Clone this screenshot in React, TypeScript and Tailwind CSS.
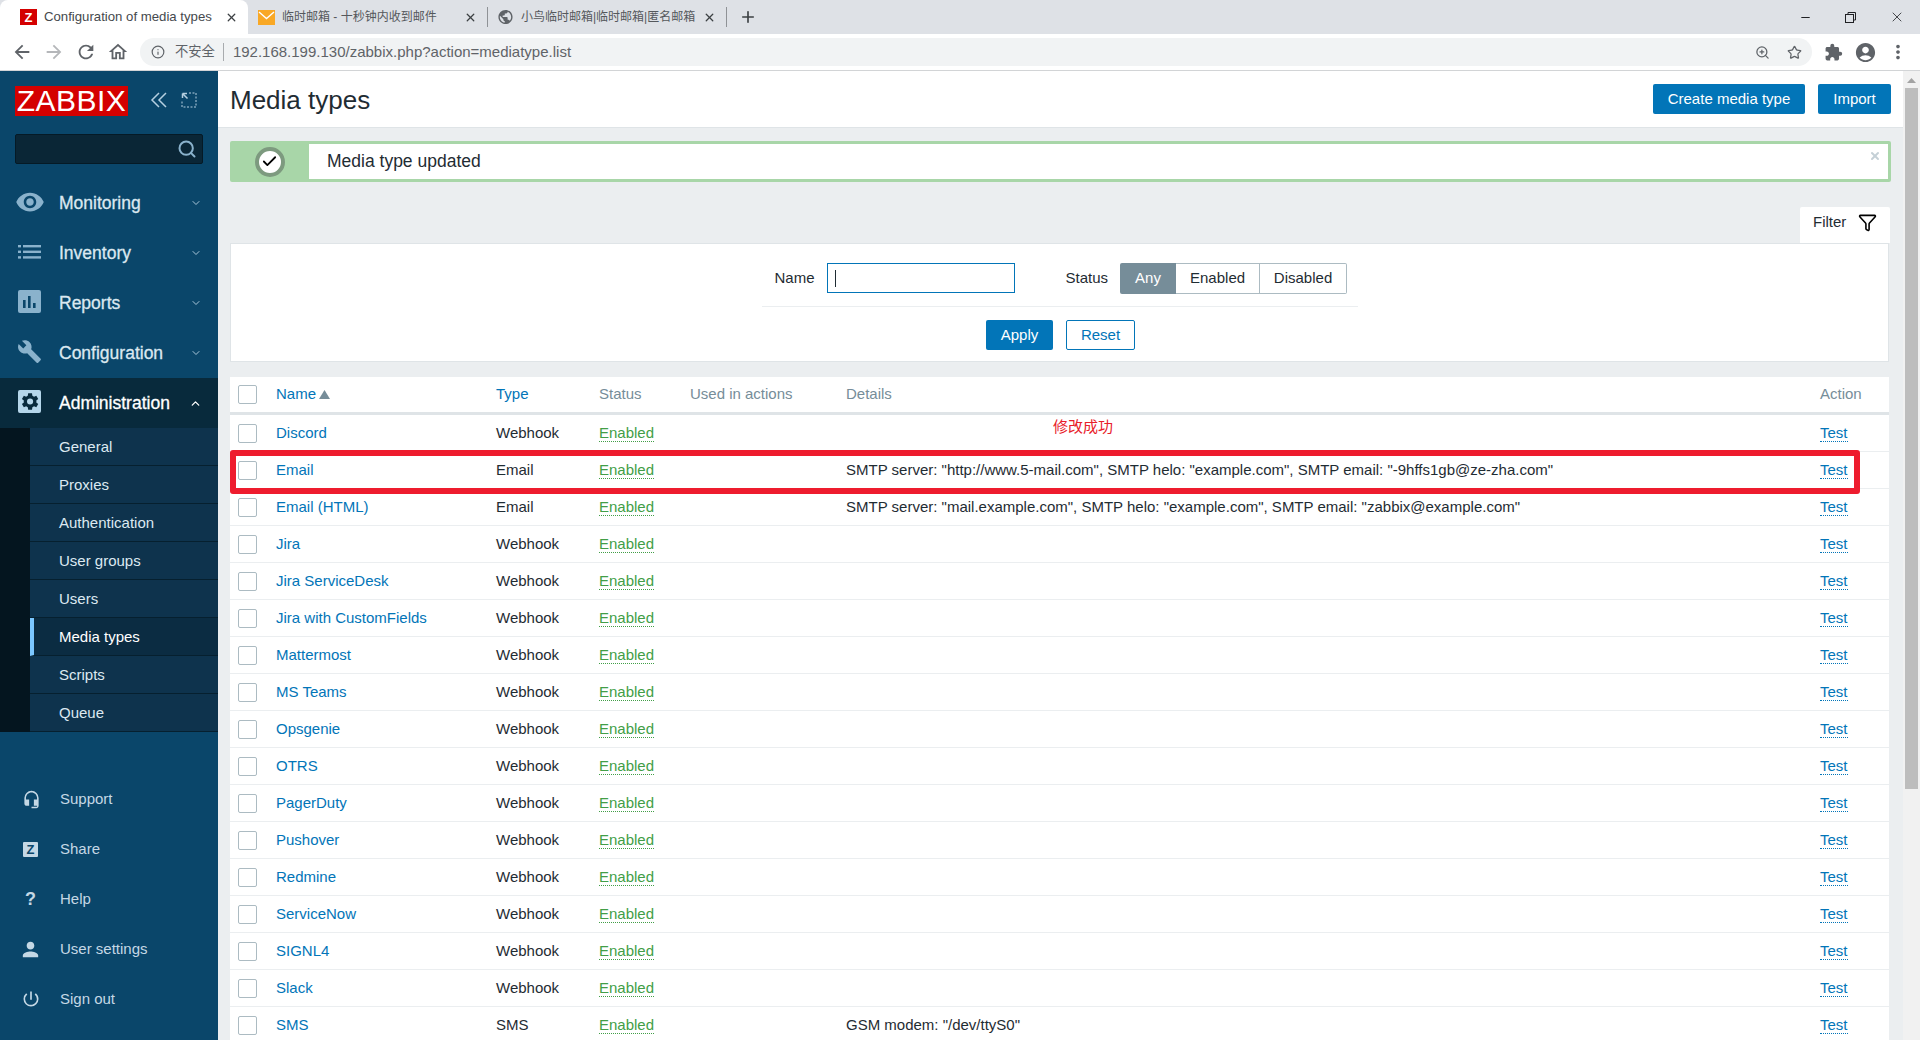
import React from 'react'
import { Info, ZoomIn, Star, X, Plus, Minus, Search, ChevronDown, ChevronUp, Funnel, Check } from 'lucide-react'
import {
  MdArrowBack, MdArrowForward, MdRefresh, MdOutlineHome, MdExtension, MdAccountCircle, MdMoreVert,
  MdPublic, MdVisibility, MdBuild, MdHeadsetMic, MdPerson, MdPowerSettingsNew,
} from 'react-icons/md'

const BLUE = 'text-[#0275b8]'

const rows = [
  { name: 'Discord', type: 'Webhook', details: '' },
  { name: 'Email', type: 'Email', details: 'SMTP server: "http://www.5-mail.com", SMTP helo: "example.com", SMTP email: "-9hffs1gb@ze-zha.com"' },
  { name: 'Email (HTML)', type: 'Email', details: 'SMTP server: "mail.example.com", SMTP helo: "example.com", SMTP email: "zabbix@example.com"' },
  { name: 'Jira', type: 'Webhook', details: '' },
  { name: 'Jira ServiceDesk', type: 'Webhook', details: '' },
  { name: 'Jira with CustomFields', type: 'Webhook', details: '' },
  { name: 'Mattermost', type: 'Webhook', details: '' },
  { name: 'MS Teams', type: 'Webhook', details: '' },
  { name: 'Opsgenie', type: 'Webhook', details: '' },
  { name: 'OTRS', type: 'Webhook', details: '' },
  { name: 'PagerDuty', type: 'Webhook', details: '' },
  { name: 'Pushover', type: 'Webhook', details: '' },
  { name: 'Redmine', type: 'Webhook', details: '' },
  { name: 'ServiceNow', type: 'Webhook', details: '' },
  { name: 'SIGNL4', type: 'Webhook', details: '' },
  { name: 'Slack', type: 'Webhook', details: '' },
  { name: 'SMS', type: 'SMS', details: 'GSM modem: "/dev/ttyS0"' },
]

const ListIcon = () => (
  <svg width="23" height="14" viewBox="0 0 23 14" fill="currentColor">
    <rect x="0" y="0" width="3" height="2.4" /><rect x="5" y="0" width="18" height="2.4" />
    <rect x="0" y="5.6" width="3" height="2.4" /><rect x="5" y="5.6" width="18" height="2.4" />
    <rect x="0" y="11.2" width="3" height="2.4" /><rect x="5" y="11.2" width="18" height="2.4" />
  </svg>
)

const ReportsIcon = () => (
  <svg width="23" height="23" viewBox="0 0 23 23">
    <rect width="23" height="23" rx="2" fill="currentColor" />
    <rect x="5" y="10" width="2.6" height="8" fill="#0a466a" />
    <rect x="10" y="6" width="2.6" height="12" fill="#0a466a" />
    <rect x="15" y="13" width="2.6" height="5" fill="#0a466a" />
  </svg>
)

const GearBoxIcon = () => (
  <svg width="23" height="23" viewBox="0 0 24 24">
    <rect width="24" height="24" rx="2" fill="currentColor" />
    <path fill="#082a3c" d="M19.1 13c.1-.3.1-.7.1-1s0-.7-.1-1l2-1.6-2-3.4-2.4 1c-.5-.4-1.100-.7-1.700-1L14.600 3.500h-4L10.200 6c-.6.3-1.200.6-1.700 1l-2.400-1-2 3.400 2 1.600c-.1.300-.1.700-.1 1s0 .7.1 1l-2 1.600 2 3.400 2.400-1c.5.400 1.100.7 1.700 1l.4 2.500h4l.4-2.500c.6-.3 1.200-.6 1.700-1l2.400 1 2-3.400-2-1.600zM12.600 15.200a3.200 3.200 0 1 1 0-6.400 3.200 3.200 0 0 1 0 6.400z" />
  </svg>
)

const menu = [
  { label: 'Monitoring', icon: <MdVisibility size={30} className="-ml-[3px]" /> },
  { label: 'Inventory', icon: <ListIcon /> },
  { label: 'Reports', icon: <ReportsIcon /> },
  { label: 'Configuration', icon: <MdBuild size={25} className="-ml-[1px]" /> },
]

const subMenu = ['General', 'Proxies', 'Authentication', 'User groups', 'Users', 'Media types', 'Scripts', 'Queue']

const bottomMenu = [
  { label: 'Support', icon: <MdHeadsetMic size={19} className="-ml-[1px]" /> },
  { label: 'Share', icon: <span className="w-[15px] h-[15px] bg-[#c5d8e5] text-[#0a466a] rounded-[1px] flex items-center justify-center text-[13px] font-bold leading-none">Z</span> },
  { label: 'Help', icon: <span className="text-[18px] font-bold leading-none pl-[2px]">?</span> },
  { label: 'User settings', icon: <MdPerson size={23} className="-ml-[4px]" /> },
  { label: 'Sign out', icon: <MdPowerSettingsNew size={20} className="-ml-[2px]" /> },
]

const MailFavicon = () => (
  <svg width="17" height="15" viewBox="0 0 17 15">
    <rect width="17" height="15" fill="#f9a825" />
    <path d="M1 2l7.500 6.500L16 2" fill="none" stroke="#fff" strokeWidth="1.400" />
  </svg>
)

const Tab = ({ icon, title, active, width, pad }: { icon: React.ReactNode; title: string; active?: boolean; width: string; pad: string }) => (
  <div className={`h-full flex items-center shrink-0 rounded-t-[8px] ${pad} ${width} ${active ? 'bg-white' : ''}`}>
    <span className="w-[17px] h-[16px] flex items-center justify-center shrink-0">{icon}</span>
    <span className={`ml-[7px] flex-1 whitespace-nowrap ${active ? 'text-[13.2px] text-[#45494d]' : 'text-[12px] text-[#55585c]'}`}>{title}</span>
    <X size={13} strokeWidth={2.4} className="mr-[10px] text-[#3c4043] shrink-0" />
  </div>
)

const Browser = () => (
  <div className="shrink-0">
    <div className="h-[34px] bg-[#dee1e6] flex items-end">
      <Tab width="w-[248px]" pad="pl-[20px]" active title="Configuration of media types"
        icon={<span className="w-[17px] h-[16px] bg-[#d40000] text-white text-[13px] font-bold leading-none flex items-center justify-center">Z</span>} />
      <Tab width="w-[239px]" pad="pl-[10px]" title="临时邮箱 - 十秒钟内收到邮件" icon={<MailFavicon />} />
      <span className="w-px h-[20px] bg-[#8f9296] mb-[7px]" />
      <Tab width="w-[238px]" pad="pl-[9px]" title="小鸟临时邮箱|临时邮箱|匿名邮箱" icon={<MdPublic size={18} className="text-[#5f6368]" />} />
      <span className="w-px h-[20px] bg-[#8f9296] mb-[7px]" />
      <Plus size={18} strokeWidth={2.2} className="ml-[12px] mb-[8px] text-[#3c4043]" />
      <div className="ml-auto h-full flex items-center text-[#202124]">
        <Minus size={13} className="mr-[33px]" />
        <svg width="11" height="11" viewBox="0 0 11 11" fill="none" stroke="currentColor" className="mr-[33px]">
          <rect x="0.5" y="2.5" width="8" height="8" /><path d="M3 2.5V0.500h7.500V8H8.500" />
        </svg>
        <X size={16} strokeWidth={1.2} className="mr-[15px]" />
      </div>
    </div>
    <div className="h-[36px] bg-white flex items-center">
      <div className="w-[140px] flex items-center pl-[11px] gap-[10px] text-[#5f6368] shrink-0">
        <MdArrowBack size={22} />
        <MdArrowForward size={22} className="text-[#b5b7ba]" />
        <MdRefresh size={22} />
        <MdOutlineHome size={22} />
      </div>
      <div className="w-[1672px] h-[28px] rounded-full bg-[#f1f3f4] flex items-center pl-[11px] pr-[10px] shrink-0">
        <Info size={14} className="text-[#5f6368]" />
        <span className="ml-[10px] text-[13.3px] text-[#5f6368]">不安全</span>
        <span className="w-px h-[18px] bg-[#a8abae] ml-[8px]" />
        <span className="ml-[9px] text-[15px] text-[#5f6368]">192.168.199.130/zabbix.php?action=mediatype.list</span>
        <ZoomIn size={15} className="ml-auto text-[#5f6368]" />
        <Star size={15} strokeWidth={2} className="ml-[17px] text-[#5f6368]" />
      </div>
      <MdExtension size={19} className="ml-[12px] text-[#5f6368]" />
      <MdAccountCircle size={23} className="ml-[11px] text-[#5f6368]" />
      <MdMoreVert size={22} className="ml-[10px] text-[#5f6368]" />
    </div>
    <div className="h-px bg-[#d2d4d6]" />
  </div>
)

const Sidebar = () => (
  <aside className="w-[218px] shrink-0 bg-[#0a466a] flex flex-col overflow-hidden">
    <div className="h-[45px] flex items-end pl-[15px] shrink-0">
      <span className="w-[113px] h-[30px] bg-[#d40000] text-white text-[30px] leading-[30px] text-center tracking-[0.5px]">ZABBIX</span>
      <svg width="18" height="16" viewBox="0 0 18 16" fill="none" stroke="#b5cfe0" strokeWidth="1.5" className="ml-[22px] mb-[8px]">
        <path d="M9 1L2 8l7 7M16 1L9 8l7 7" />
      </svg>
      <svg width="16" height="16" viewBox="0 0 16 16" fill="none" stroke="#b5cfe0" className="ml-[13px] mb-[8px]">
        <path d="M8 1h7v14H1V8" strokeDasharray="2 1.5" /><path d="M1.500 1.500l5 5M1.500 1.500v4.500M1.500 1.500h4.500" strokeWidth="1.5" />
      </svg>
    </div>
    <div className="mt-[18px] mx-[15px] h-[30px] bg-[#0a2636] border border-[#051a26] rounded-[2px] flex items-center justify-end pr-[5px] shrink-0">
      <Search size={20} strokeWidth={2.4} className="text-[#8ab2cc]" />
    </div>
    <nav className="mt-[14px] shrink-0">
      {menu.map((m) => (
        <div key={m.label} className="h-[50px] flex items-center text-[#dbe8f0]">
          <span className="w-[59px] pl-[18px] -mt-[3px] flex items-center text-[#8ab2cc]">{m.icon}</span>
          <span className="text-[17.5px] flex-1 [-webkit-text-stroke:0.3px_currentColor]">{m.label}</span>
          <ChevronDown size={12} strokeWidth={2} className="mr-[16px] text-[#a9c6d9]" />
        </div>
      ))}
      <div className="h-[50px] flex items-center bg-[#082a3c] text-white">
        <span className="w-[59px] pl-[18px] -mt-[3px] flex items-center text-[#b5d6ea]"><GearBoxIcon /></span>
        <span className="text-[17.5px] flex-1 [-webkit-text-stroke:0.3px_currentColor]">Administration</span>
        <ChevronUp size={13} strokeWidth={2.4} className="mr-[16px]" />
      </div>
      <div className="bg-[#04151f] pl-[30px]">
        {subMenu.map((s) => (
          <div key={s} className={`h-[38px] flex items-center pt-[2px] text-[15px] border-b border-[#06202f] ${s === 'Media types' ? 'bg-[#0b2c42] text-white border-l-4 border-l-[#7bc7ff] pl-[25px]' : 'bg-[#0e334d] text-[#dce9f1] pl-[29px]'}`}>
            {s}
          </div>
        ))}
      </div>
    </nav>
    <div className="mt-[42px] shrink-0">
      {bottomMenu.map((b) => (
        <div key={b.label} className="h-[50px] flex items-center text-[#c5d8e5]">
          <span className="w-[60px] pl-[23px] flex items-center">{b.icon}</span>
          <span className="text-[15px]">{b.label}</span>
        </div>
      ))}
    </div>
  </aside>
)

const Checkbox = () => <span className="block w-[19px] h-[19px] bg-white border border-[#acbbc2] rounded-[2px]" />

const TableRow = ({ name, type, details }: { name: string; type: string; details: string }) => (
  <div className="h-[37px] grid grid-cols-[46px_220px_103px_91px_156px_974px_69px] items-center border-b border-[#ebeef0] text-[15px] text-[#1f2c33]">
    <span className="pl-[8px]"><Checkbox /></span>
    <span className={BLUE}>{name}</span>
    <span>{type}</span>
    <span><span className="text-[#429e47] border-b border-dotted border-[#429e47]">Enabled</span></span>
    <span />
    <span>{details}</span>
    <span><span className={`${BLUE} border-b border-dotted border-[#0275b8]`}>Test</span></span>
  </div>
)

export default function App() {
  return (
    <div className="h-screen flex flex-col overflow-hidden bg-white font-['Liberation_Sans','Noto_Sans_CJK_SC',sans-serif]">
      <Browser />
      <div className="flex-1 flex min-h-0">
        <Sidebar />
        <main className="flex-1 min-w-0 bg-[#ebeef0] overflow-hidden relative">
          {/* page header */}
          <div className="h-[57px] bg-white border-b border-[#dfe4e7] flex items-center px-[12px]">
            <h1 className="text-[26px] text-[#1f2c33] flex-1 pt-[2px]">Media types</h1>
            <button className="h-[30px] w-[152px] bg-[#0275b8] text-white text-[15px] rounded-[2px]">Create media type</button>
            <button className="h-[30px] w-[73px] ml-[13px] bg-[#0275b8] text-white text-[15px] rounded-[2px]">Import</button>
          </div>

          <div className="px-[12px]">
            {/* message */}
            <div className="mt-[13px] h-[41px] bg-[#a8d6a8] rounded-[2px] flex p-[3px] pl-0">
              <div className="w-[79px] flex items-center justify-center shrink-0">
                <span className="w-[30px] h-[30px] rounded-full bg-white border-[4px] border-[#7d9a7f] flex items-center justify-center">
                  <Check size={17} strokeWidth={2.5} className="text-black" />
                </span>
              </div>
              <div className="flex-1 bg-white flex items-center pl-[18px] text-[17.5px] text-[#1f2c33] relative">
                Media type updated
                <X size={12} strokeWidth={4} className="absolute right-[7px] top-[6px] text-[#c5d0d6]" />
              </div>
            </div>

            {/* filter */}
            <div className="mr-[2px]">
              <div className="mt-[25px] flex justify-end">
                <div className="w-[90px] -mr-[1px] h-[36px] bg-white rounded-t-[2px] flex items-center pl-[13px] pb-[6px] text-[15px] text-[#1f2c33]">
                  Filter
                  <Funnel size={19} strokeWidth={2} className="ml-[12px] text-black" />
                </div>
              </div>
              <div className="h-[119px] bg-white border border-[#dfe4e7] flex flex-col items-center">
                <div className="mt-[19px] w-[596px] h-[44px] border-b border-[#ebeef0] flex items-start pl-[13px] text-[15px] text-[#1f2c33] shrink-0">
                  <span className="h-[31px] flex items-center">Name</span>
                  <span className="ml-[12px] w-[188px] h-[30px] border border-[#0275b8] flex items-center pl-[7px]">
                    <span className="w-px h-[17px] bg-[#1f2c33]" />
                  </span>
                  <span className="ml-[51px] h-[31px] flex items-center">Status</span>
                  <div className="ml-[12px] h-[31px] flex">
                    <span className="w-[56px] bg-[#768d99] text-white rounded-l-[2px] flex items-center justify-center">Any</span>
                    <span className="w-[84px] border border-l-0 border-[#acbbc2] flex items-center justify-center">Enabled</span>
                    <span className="w-[87px] border border-l-0 border-[#acbbc2] rounded-r-[2px] flex items-center justify-center">Disabled</span>
                  </div>
                </div>
                <div className="mt-[13px] ml-[2px] flex gap-[13px] text-[15px]">
                  <button className="w-[67px] h-[30px] bg-[#0275b8] text-white rounded-[2px]">Apply</button>
                  <button className={`w-[69px] h-[30px] bg-white border border-[#0275b8] rounded-[2px] ${BLUE}`}>Reset</button>
                </div>
              </div>

              {/* table */}
              <div className="mt-[15px] bg-white relative">
                <div className="h-[38px] grid grid-cols-[46px_220px_103px_91px_156px_974px_69px] items-center border-b-[3px] border-[#dfe4e7] text-[15px] text-[#768d99]">
                  <span className="pl-[8px]"><Checkbox /></span>
                  <span className={`${BLUE} flex items-center gap-[3px]`}>
                    Name
                    <svg width="11" height="9" viewBox="0 0 11 9" fill="#768d99"><path d="M5.5 0L11 9H0z" /></svg>
                  </span>
                  <span className={BLUE}>Type</span>
                  <span>Status</span>
                  <span>Used in actions</span>
                  <span>Details</span>
                  <span>Action</span>
                </div>
                {rows.map((r) => (
                  <TableRow key={r.name} name={r.name} type={r.type} details={r.details} />
                ))}
                {/* annotations drawn over the screenshot */}
                <span className="absolute left-[823px] top-[39px] text-[15px] text-[#e8202a]">修改成功</span>
                <div className="absolute left-0 top-[73px] w-[1630px] h-[44px] border-[6px] border-[#ee1c2e] rounded-[3px] pointer-events-none" />
              </div>
            </div>
          </div>
        </main>
        {/* scrollbar */}
        <div className="w-[17px] shrink-0 bg-[#f1f1f1] flex flex-col items-center">
          <svg width="9" height="5" viewBox="0 0 9 5" fill="#a3a3a3" className="mt-[7px]"><path d="M4.5 0L9 5H0z" /></svg>
          <div className="mt-[5px] w-[13px] h-[701px] bg-[#bdbdbd]" />
        </div>
      </div>
    </div>
  )
}
